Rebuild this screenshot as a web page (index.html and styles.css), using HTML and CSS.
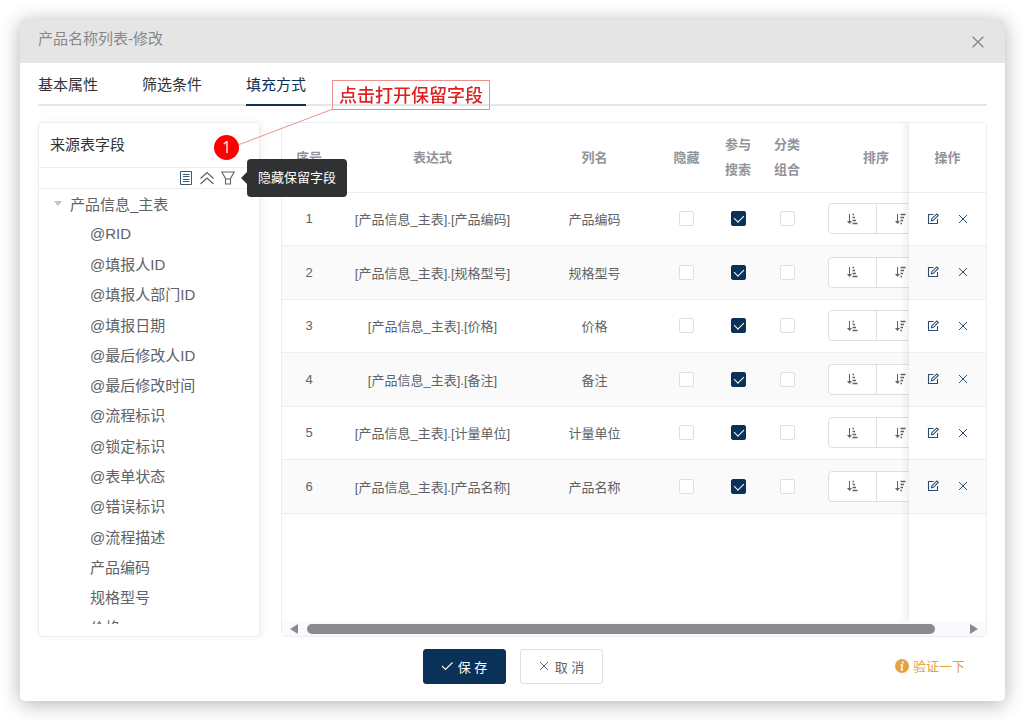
FILE: index.html
```
<!DOCTYPE html>
<html lang="zh-CN">
<head>
<meta charset="utf-8">
<title>产品名称列表-修改</title>
<link rel="stylesheet" href="styles.css">
</head>

<body>
<!-- icons used more than once -->
<svg class="sprite" aria-hidden="true">
	<symbol id="i-asc" viewBox="0 0 12 12"><path d="M3.500 1v9" fill="none" stroke="currentColor"/><path d="M1 8h5l-2.500 3z" fill="currentColor"/><path d="M6.500 1.500h1.500M6.500 4.500h2.500M6.500 7.500h3.500M6.500 10.500h5" stroke="currentColor" stroke-width="1.300"/></symbol>
	<symbol id="i-desc" viewBox="0 0 12 12"><path d="M3.500 1v9" fill="none" stroke="currentColor"/><path d="M1 8h5l-2.500 3z" fill="currentColor"/><path d="M6.500 1.500h5M6.500 4.500h3.500M6.500 7.500h2.500M6.500 10.500h1.500" stroke="currentColor" stroke-width="1.300"/></symbol>
	<symbol id="i-edit" viewBox="0 0 12 12"><path d="M6.500 1.500H1.500v9h9V6M4.500 7.700l.4-2L9.800.9l1.500 1.500-4.900 4.900z" fill="none" stroke="currentColor" stroke-width="1.100"/></symbol>
	<symbol id="i-close" viewBox="0 0 12 12"><path d="M2 2l8 8M10 2l-8 8" fill="none" stroke="currentColor"/></symbol>
</svg>

<div class="dialog">
	<div class="dialog-header">
		<span>产品名称列表-修改</span>
		<button class="icon-btn close" aria-label="关闭"><svg><use href="#i-close"/></svg></button>
	</div>

	<div class="tabs">
		<a href="#base">基本属性</a>
		<a href="#filter">筛选条件</a>
		<a href="#fill" class="active">填充方式</a>
	</div>

	<div class="content">
		<!-- source fields -->
		<div class="panel sidebar">
			<div class="sidebar-title">来源表字段</div>
			<div class="toolbar">
				<button class="icon-btn list" aria-label="列表"><svg viewBox="0 0 14 14"><path d="M1.500.5h11v13h-11zM4 3.500h6.500M4 5.500h6.500M4 8.500h6.500M4 10.500h6.500" fill="none" stroke="currentColor"/></svg></button>
				<button class="icon-btn" aria-label="收起"><svg viewBox="0 0 14 14"><path d="M.5 7.500L7 1.500l6.500 6M.5 13L7 7l6.500 6" fill="none" stroke="currentColor" stroke-width="1.200"/></svg></button>
				<div class="tip-wrap">
					<button class="icon-btn" aria-label="筛选"><svg viewBox="0 0 14 14"><path d="M.8 1h12.400L9.500 7.500V13h-5V7.500zM4.500 8h5" fill="none" stroke="currentColor" stroke-width="1.100"/></svg></button>
					<div class="tooltip">隐藏保留字段</div>
				</div>
			</div>
			<div class="tree">
				<ul>
					<li class="root"><span class="caret"></span>产品信息_主表</li>
					<li>@RID</li>
					<li>@填报人ID</li>
					<li>@填报人部门ID</li>
					<li>@填报日期</li>
					<li>@最后修改人ID</li>
					<li>@最后修改时间</li>
					<li>@流程标识</li>
					<li>@锁定标识</li>
					<li>@表单状态</li>
					<li>@错误标识</li>
					<li>@流程描述</li>
					<li>产品编码</li>
					<li>规格型号</li>
					<li>价格</li>
				</ul>
			</div>
		</div>

		<!-- columns table -->
		<div class="panel main">
			<div class="table-wrap">
				<table>
					<colgroup>
						<col class="c-no"><col class="c-exp"><col class="c-name"><col class="c-hide"><col class="c-search"><col class="c-group"><col class="c-sort"><col class="c-op">
					</colgroup>
					<thead>
						<tr><th>序号</th><th>表达式</th><th>列名</th><th>隐藏</th><th>参与<br>搜索</th><th>分类<br>组合</th><th>排序</th><th class="fixed">操作</th></tr>
					</thead>
					<tbody>
						<tr>
							<td>1</td><td>[产品信息_主表].[产品编码]</td><td>产品编码</td>
							<td><input type="checkbox" aria-label="隐藏"></td><td><input type="checkbox" aria-label="参与搜索" checked></td><td><input type="checkbox" aria-label="分类组合"></td>
							<td><div class="sort"><button aria-label="升序"><svg><use href="#i-asc"/></svg></button><button aria-label="降序"><svg><use href="#i-desc"/></svg></button></div></td>
							<td class="fixed"><div class="ops"><button class="icon-btn" aria-label="编辑"><svg><use href="#i-edit"/></svg></button><button class="icon-btn" aria-label="删除"><svg><use href="#i-close"/></svg></button></div></td>
						</tr>
						<tr>
							<td>2</td><td>[产品信息_主表].[规格型号]</td><td>规格型号</td>
							<td><input type="checkbox" aria-label="隐藏"></td><td><input type="checkbox" aria-label="参与搜索" checked></td><td><input type="checkbox" aria-label="分类组合"></td>
							<td><div class="sort"><button aria-label="升序"><svg><use href="#i-asc"/></svg></button><button aria-label="降序"><svg><use href="#i-desc"/></svg></button></div></td>
							<td class="fixed"><div class="ops"><button class="icon-btn" aria-label="编辑"><svg><use href="#i-edit"/></svg></button><button class="icon-btn" aria-label="删除"><svg><use href="#i-close"/></svg></button></div></td>
						</tr>
						<tr>
							<td>3</td><td>[产品信息_主表].[价格]</td><td>价格</td>
							<td><input type="checkbox" aria-label="隐藏"></td><td><input type="checkbox" aria-label="参与搜索" checked></td><td><input type="checkbox" aria-label="分类组合"></td>
							<td><div class="sort"><button aria-label="升序"><svg><use href="#i-asc"/></svg></button><button aria-label="降序"><svg><use href="#i-desc"/></svg></button></div></td>
							<td class="fixed"><div class="ops"><button class="icon-btn" aria-label="编辑"><svg><use href="#i-edit"/></svg></button><button class="icon-btn" aria-label="删除"><svg><use href="#i-close"/></svg></button></div></td>
						</tr>
						<tr>
							<td>4</td><td>[产品信息_主表].[备注]</td><td>备注</td>
							<td><input type="checkbox" aria-label="隐藏"></td><td><input type="checkbox" aria-label="参与搜索" checked></td><td><input type="checkbox" aria-label="分类组合"></td>
							<td><div class="sort"><button aria-label="升序"><svg><use href="#i-asc"/></svg></button><button aria-label="降序"><svg><use href="#i-desc"/></svg></button></div></td>
							<td class="fixed"><div class="ops"><button class="icon-btn" aria-label="编辑"><svg><use href="#i-edit"/></svg></button><button class="icon-btn" aria-label="删除"><svg><use href="#i-close"/></svg></button></div></td>
						</tr>
						<tr>
							<td>5</td><td>[产品信息_主表].[计量单位]</td><td>计量单位</td>
							<td><input type="checkbox" aria-label="隐藏"></td><td><input type="checkbox" aria-label="参与搜索" checked></td><td><input type="checkbox" aria-label="分类组合"></td>
							<td><div class="sort"><button aria-label="升序"><svg><use href="#i-asc"/></svg></button><button aria-label="降序"><svg><use href="#i-desc"/></svg></button></div></td>
							<td class="fixed"><div class="ops"><button class="icon-btn" aria-label="编辑"><svg><use href="#i-edit"/></svg></button><button class="icon-btn" aria-label="删除"><svg><use href="#i-close"/></svg></button></div></td>
						</tr>
						<tr>
							<td>6</td><td>[产品信息_主表].[产品名称]</td><td>产品名称</td>
							<td><input type="checkbox" aria-label="隐藏"></td><td><input type="checkbox" aria-label="参与搜索" checked></td><td><input type="checkbox" aria-label="分类组合"></td>
							<td><div class="sort"><button aria-label="升序"><svg><use href="#i-asc"/></svg></button><button aria-label="降序"><svg><use href="#i-desc"/></svg></button></div></td>
							<td class="fixed"><div class="ops"><button class="icon-btn" aria-label="编辑"><svg><use href="#i-edit"/></svg></button><button class="icon-btn" aria-label="删除"><svg><use href="#i-close"/></svg></button></div></td>
						</tr>
						<!-- takes the space that is left, keeps the fixed column going -->
						<tr class="filler"><td colspan="7"></td><td class="fixed"></td></tr>
					</tbody>
				</table>
			</div>
			<div class="scrollbar">
				<span class="arrow left"></span>
				<div class="track"><div class="thumb"></div></div>
				<span class="arrow right"></span>
			</div>
		</div>
	</div>

	<div class="footer">
		<div class="footer-btns">
			<button class="btn primary"><svg viewBox="0 0 12 12"><path d="M1 6l3.500 3.500L11.500 2.500" fill="none" stroke="currentColor" stroke-width="1.100"/></svg>保 存</button>
			<button class="btn"><svg><use href="#i-close"/></svg>取 消</button>
		</div>
		<a href="#check" class="verify"><svg viewBox="0 0 14 14"><circle cx="7" cy="7" r="7" fill="currentColor"/><path d="M7.800 2.600v1.800M5.500 6h1.800l-.8 4.800h1.500" fill="none" stroke="#fff" stroke-width="1.500"/></svg>验证一下</a>
	</div>

	<!-- help note over the dialog -->
	<svg class="note-line" viewBox="0 0 96 38"><path d="M0 37L95 1" stroke="#f0908c" fill="none"/></svg>
	<div class="note">点击打开保留字段</div>
	<div class="badge">1</div>
</div>
</body>
</html>
```
FILE: styles.css
```
* {
	box-sizing: border-box;
}
body {
	margin: 0;
	padding: 19px 19px 20px 20px;
	min-height: 100vh;
	display: flex;
	background-color: #fff;
	font-family: "Liberation Sans", "Noto Sans CJK SC", sans-serif;
	font-size: 13px;
	color: #606266;
}
button {
	font-family: inherit;
	font-size: 13px;
	color: inherit;
	cursor: pointer;
}
a {
	text-decoration: none;
}
svg {
	display: block;
	width: 12px;
	height: 12px;
	flex: none;
}
.sprite {
	display: none;
}
.icon-btn {
	display: block;
	padding: 0;
	border: 0;
	background: none;
}

.dialog {
	position: relative;
	flex: 1;
	min-width: 0;
	display: flex;
	flex-direction: column;
	background-color: #fff;
	border-radius: 5px;
	box-shadow: 0 3px 20px rgba(0, 0, 0, 0.3);
}
.dialog-header {
	display: flex;
	justify-content: space-between;
	align-items: center;
	height: 44px;
	padding: 0 19px 4px 18px;
	background-color: #e5e5e5;
	border-radius: 5px 5px 0 0;
	font-size: 15px;
	line-height: 20px;
	color: #888;
}
.close {
	padding-top: 5px;
}
.close svg {
	width: 16px;
	height: 16px;
}

.tabs {
	display: flex;
	gap: 44px;
	margin: 0 18px;
	height: 43px;
	border-bottom: 2px solid #e4e7ea;
	font-size: 15px;
	line-height: 43px;
}
.tabs a {
	height: 43px;
	color: #303133;
}
.tabs .active {
	color: #0a3158;
	border-bottom: 2px solid #0a3158;
}

.content {
	flex: 1;
	display: flex;
	gap: 21px;
	margin: 16px 18px 0;
}
.panel {
	display: flex;
	flex-direction: column;
	border: 1px solid #ebeef2;
	border-radius: 4px;
}
.sidebar {
	width: 222px;
	flex: none;
	box-shadow: 2px 0 6px rgba(0, 0, 0, 0.06);
}
.sidebar-title {
	height: 45px;
	padding-left: 11px;
	line-height: 43px;
	border-bottom: 1px solid #ebeef2;
	font-size: 15px;
	color: #303133;
}
.toolbar {
	display: flex;
	justify-content: flex-end;
	align-items: center;
	gap: 7px;
	height: 21px;
	padding-right: 24px;
	border-bottom: 1px solid #ebeef2;
}
.toolbar svg {
	width: 14px;
	height: 14px;
}
.toolbar .list {
	color: #3c5a7a;
}
.tip-wrap {
	position: relative;
}
.tooltip {
	position: absolute;
	left: 26px;
	top: -12px;
	z-index: 5;
	padding: 0 11px;
	line-height: 38px;
	white-space: nowrap;
	background-color: #303133;
	border-radius: 4px;
	color: #fff;
}
.tooltip::before {
	content: "";
	position: absolute;
	left: -6px;
	top: 13px;
	border: 6px solid transparent;
	border-left: 0;
	border-right-color: #303133;
}
.tree {
	flex: 1 1 0;
	min-height: 0;
	margin-bottom: 12px;
	overflow: hidden;
	font-size: 15px;
}
.tree ul {
	display: grid;
	grid-auto-rows: 1fr;
	height: 454px;
	margin: 0;
	padding: 0;
	list-style: none;
}
.tree li {
	display: flex;
	align-items: center;
	padding: 0 0 2px 51px;
}
.tree .root {
	padding-left: 15px;
	gap: 8px;
}
.caret {
	border: 4px solid transparent;
	border-top: 5px solid #c0c4cc;
	border-bottom: 0;
}

.main {
	flex: 1;
	min-width: 0;
}
.table-wrap {
	flex: 1;
	display: flex;
	overflow: hidden;
}
table {
	width: 100%;
	min-width: 736px;
	table-layout: fixed;
	border-collapse: separate;
	border-spacing: 0;
	text-align: center;
}
.c-no { width: 54px; }
.c-name { width: 131px; }
.c-hide { width: 53px; }
.c-search { width: 50px; }
.c-group { width: 48px; }
.c-sort { width: 130px; }
.c-op { width: 77px; }
th, td {
	padding: 0 0 1px;
	border-bottom: 1px solid #ebeef2;
	background-color: #fff;
}
th {
	height: 70px;
	line-height: 25px;
	color: #909399;
}
td {
	height: 53px;
}
tr:nth-child(even) td {
	height: 54px;
	background-color: #fafafa;
}
tr.filler td {
	height: auto;
	border: 0;
}
.fixed {
	position: sticky;
	right: 0;
}
.fixed::before {
	content: "";
	position: absolute;
	top: 0;
	bottom: -1px;
	left: -8px;
	width: 8px;
	background: linear-gradient(to left, rgba(0, 0, 0, 0.06), transparent);
}
input[type="checkbox"] {
	appearance: none;
	display: block;
	position: relative;
	width: 15px;
	height: 15px;
	margin: 0 auto;
	border: 1px solid #dcdfe6;
	border-radius: 2px;
	background-color: #fff;
}
input[type="checkbox"]:checked {
	border-color: #0a3158;
	background-color: #0a3158;
}
input[type="checkbox"]:checked::after {
	content: "";
	position: absolute;
	left: 4px;
	top: 1px;
	width: 5px;
	height: 8px;
	border: solid #fff;
	border-width: 0 1px 1px 0;
	transform: rotate(45deg);
}
.sort {
	display: flex;
	width: 97px;
	height: 31px;
	margin: 0 auto;
	border: 1px solid #dcdfe6;
	border-radius: 4px;
	background-color: #fff;
}
.sort button {
	flex: 1;
	display: flex;
	justify-content: center;
	align-items: center;
	padding: 0;
	border: 0;
	background: none;
}
.sort button + button {
	border-left: 1px solid #dcdfe6;
}
.ops {
	display: flex;
	justify-content: center;
	gap: 18px;
	color: #2c4d70;
}

.scrollbar {
	display: flex;
	align-items: center;
	gap: 9px;
	height: 15px;
	padding: 0 8px;
	background-color: #fafafc;
}
.track {
	flex: 1;
}
.thumb {
	width: 96%;
	height: 10px;
	border-radius: 5px;
	background-color: #8b8b8d;
}
.arrow {
	border: 5px solid transparent;
}
.arrow.left {
	border-left: 0;
	border-right: 8px solid #8b8b8d;
}
.arrow.right {
	border-right: 0;
	border-left: 8px solid #8b8b8d;
}

.footer {
	display: grid;
	grid-template-columns: 1fr auto 1fr;
	align-items: center;
	padding: 12px 40px 17px;
}
.footer-btns {
	grid-column: 2;
	display: flex;
	gap: 14px;
}
.btn {
	display: flex;
	justify-content: center;
	align-items: center;
	gap: 5px;
	width: 83px;
	height: 35px;
	padding: 0 0 1px;
	border: 1px solid #dcdfe6;
	border-radius: 3px;
	background-color: #fff;
}
.primary {
	border-color: #0a3158;
	background-color: #0a3158;
	color: #fff;
}
.verify {
	justify-self: end;
	display: flex;
	align-items: center;
	gap: 4px;
	padding-bottom: 2px;
	color: #e6a23c;
}
.verify svg {
	width: 14px;
	height: 14px;
}

.note {
	position: absolute;
	left: 312px;
	top: 61px;
	z-index: 6;
	padding: 2px 6px 0;
	border: 1px solid #f0908c;
	line-height: 26px;
	font-size: 18px;
	font-weight: 500;
	color: #e02020;
}
.note-line {
	position: absolute;
	left: 218px;
	top: 89px;
	z-index: 6;
	width: 96px;
	height: 38px;
}
.badge {
	position: absolute;
	left: 194px;
	top: 116px;
	z-index: 6;
	width: 25px;
	height: 25px;
	border-radius: 50%;
	background-color: #f00;
	font-family: "Open Sans", sans-serif;
	font-size: 16px;
	line-height: 25px;
	text-align: center;
	color: #fff;
}
```
